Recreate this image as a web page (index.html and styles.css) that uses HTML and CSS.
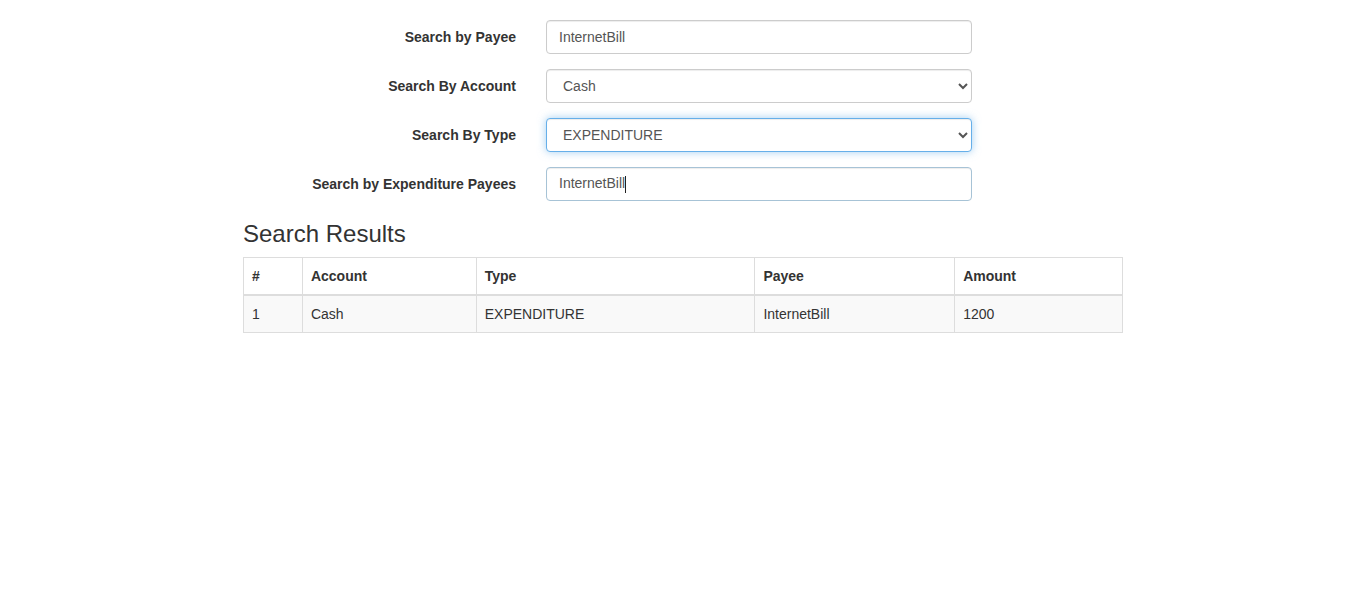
FILE: index.html
```html
<!DOCTYPE html>
<html>
<head>
<meta charset="utf-8">
<title>Search</title>
<link rel="stylesheet" href="styles.css">
</head>
<body>
<div class="page">
  <form class="search-form">
    <div class="form-group">
      <label class="form-label">Search by Payee</label>
      <div class="form-field"><input class="form-control" type="text" value="InternetBill"></div>
    </div>
    <div class="form-group">
      <label class="form-label">Search By Account</label>
      <div class="form-field">
        <select class="form-control">
          <option>Cash</option>
        </select>
      </div>
    </div>
    <div class="form-group">
      <label class="form-label">Search By Type</label>
      <div class="form-field">
        <select class="form-control focused">
          <option>EXPENDITURE</option>
        </select>
      </div>
    </div>
    <div class="form-group">
      <label class="form-label">Search by Expenditure Payees</label>
      <div class="form-field">
        <div class="fake-input"><span class="fake-text">InternetBill</span><span class="caret"></span></div>
      </div>
    </div>
  </form>
  <h3 class="results-title">Search Results</h3>
  <table class="results">
    <thead>
      <tr>
        <th class="c-num">#</th>
        <th class="c-acc">Account</th>
        <th class="c-type">Type</th>
        <th class="c-payee">Payee</th>
        <th class="c-amt">Amount</th>
      </tr>
    </thead>
    <tbody>
      <tr>
        <td>1</td>
        <td>Cash</td>
        <td>EXPENDITURE</td>
        <td>InternetBill</td>
        <td>1200</td>
      </tr>
    </tbody>
  </table>
</div>
</body>
</html>
```
FILE: styles.css
```css
* { box-sizing: border-box; }
html, body { margin: 0; padding: 0; background: #fff; }
body {
  font-family: "Liberation Sans", Arial, sans-serif;
  font-size: 14px;
  line-height: 1.42857;
  color: #333;
}
.page {
  width: 880px;
  margin: 0 auto;
  padding-top: 20px;
}
.search-form { margin: 0; }
.form-group {
  display: flex;
  margin: 0 -15px 15px;
}
.form-label {
  width: 303px;
  flex: none;
  padding: 8px 15px 0;
  text-align: right;
  font-weight: bold;
}
.form-field {
  width: 456px;
  flex: none;
  padding: 0 15px;
}
.form-control {
  display: block;
  width: 100%;
  height: 34px;
  padding: 6px 12px;
  font-family: inherit;
  font-size: 14px;
  line-height: 1.42857;
  color: #555;
  background: #fff;
  border: 1px solid #ccc;
  border-radius: 4px;
  box-shadow: inset 0 1px 1px rgba(0,0,0,.075);
  margin: 0;
}
.form-control.focused {
  border-color: #66afe9;
  outline: 0;
  box-shadow: inset 0 1px 1px rgba(0,0,0,.075), 0 0 8px rgba(102,175,233,.6);
}
.fake-input {
  position: relative;
  height: 34px;
  padding: 6px 12px;
  color: #555;
  border: 1px solid #a7c3d6;
  border-radius: 4px;
  box-shadow: inset 0 1px 1px rgba(0,0,0,.075);
  display: flex;
  align-items: center;
}
.caret {
  display: inline-block;
  width: 1px;
  height: 17px;
  background: #222;
}
.results-title {
  font-size: 24px;
  font-weight: 500;
  line-height: 1.1;
  margin: 20px 0 10px;
}
.results {
  width: 880px;
  border-collapse: collapse;
  border-spacing: 0;
  border: 1px solid #ddd;
}
.results th, .results td {
  padding: 8px;
  line-height: 20px;
  text-align: left;
  border: 1px solid #ddd;
  vertical-align: top;
}
.results th { font-weight: bold; border-bottom: 2px solid #ddd; }
.results tbody tr { background: #f9f9f9; }
.c-num { width: 59px; }
.c-acc { width: 174px; }
.c-type { width: 279px; }
.c-payee { width: 200px; }
.c-amt { width: 168px; }
```
